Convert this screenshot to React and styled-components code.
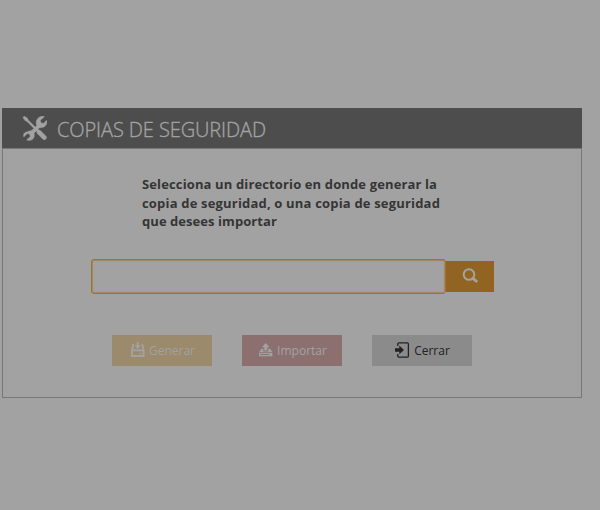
import React from "react";
import styled, { createGlobalStyle } from "styled-components";

const GlobalStyle = createGlobalStyle`
  * { box-sizing: border-box; }
  body { margin: 0; background: #a2a2a2; font-family: "Open Sans", "Noto Sans", sans-serif; }
`;

const Page = styled.main`
  height: 510px;
  padding: 108px 0 0 2px;
  overflow: hidden;
`;

const Dialog = styled.section`
  width: 580px;
  height: 290px;
`;

const Header = styled.header`
  display: flex;
  align-items: center;
  height: 40px;
  padding-left: 20px;
  background: #4d4d4d;
  color: #a2a2a2;
`;

const Title = styled.h1`
  margin: 4px 0 0 10px;
  font-size: 20px;
  line-height: 26px;
  font-weight: 300;
  letter-spacing: -0.1px;
  -webkit-text-stroke: 0.35px currentColor;
  white-space: nowrap;
`;

const Body = styled.div`
  display: flex;
  flex-direction: column;
  height: 250px;
  padding-top: 26px;
  border: 1px solid #777;
`;

const Message = styled.p`
  margin: 0 0 0 139px;
  font-size: 13px;
  line-height: 18.5px;
  font-weight: 700;
  color: #353535;
  white-space: nowrap;
`;

const Line = styled.span`
  display: block;
  letter-spacing: ${(p) => p.$spacing || "0"};
`;

const SearchRow = styled.div`
  display: flex;
  align-items: flex-end;
  margin: 28px 0 0 88px;
`;

const PathInput = styled.input`
  width: 355px;
  height: 35px;
  padding: 0 8px;
  border: 1px solid #a0722f;
  border-radius: 3px;
  outline: none;
  background: #a2a2a2;
  box-shadow: inset 0 0 1px 0.5px #a0722f;
  font: inherit;
`;

const SearchButton = styled.button`
  display: flex;
  align-items: center;
  justify-content: center;
  width: 48px;
  height: 31px;
  margin-bottom: 2px;
  padding: 0;
  border: 0;
  background: #916521;
  color: #a2a2a2;
`;

const Actions = styled.div`
  display: flex;
  gap: 30px;
  margin: 41px 0 0 109px;
`;

const Action = styled.button`
  display: flex;
  align-items: center;
  justify-content: center;
  gap: 4px;
  width: 100px;
  height: 31px;
  padding: 0 0 0 ${(p) => p.$shift || "0"};
  border: 0;
  background: ${(p) => p.$bg};
  color: ${(p) => p.$color || "#a2a2a2"};
  font-family: inherit;
  font-size: 12px;
`;

const ToolsIcon = () => (
  <svg width="25" height="25" viewBox="0 0.5 25 25" fill="currentColor" stroke="currentColor">
    <path strokeWidth="0.5" d="M5.5 16.2 10 14.8 14.8 10C13.4 6.4 14.7 2.6 18.4 1.2c1.3-.5 2.7-.5 4 0l-4.1 3.6.5 2.4 2.6.7 3.5-3.2c.5 5-2.3 7.8-7.4 7.5L12 17.7c1.1 3.3-.7 6.6-3.9 7.1-1.2.2-2.4 0-3.4-.4L8.3 21l-.7-2.5-2.4-.4L1.8 21.4c-.8-2.9.5-4.6 3.7-5.2Z" />
    <path strokeWidth="0.5" d="m2 .8 3 1.4 1.4 2.5L16 14.3l2 .4 6.2 6.2c1.4 1.8-1.3 4.4-3 3L15 17.7l-.2-2L5 6 2.7 4.8 1 2Z" />
  </svg>
);

const SearchIcon = () => (
  <svg width="16" height="16" viewBox="0 0 16 16" fill="none" stroke="currentColor">
    <circle cx="7" cy="6.5" r="5.3" strokeWidth="2" />
    <path d="m10.9 10.4 3.4 2.8" strokeWidth="2.8" strokeLinecap="round" />
  </svg>
);

const SaveIcon = () => (
  <svg width="14" height="16" viewBox="0 0 14 16" fill="none" stroke="currentColor">
    <path d="M2.5 2 1 7.8v6.2h11.6V7.8L11.1 2M1 8.4h12" strokeWidth="1.9" />
    <path d="M6.7 0v4" strokeWidth="1.8" />
    <path d="M3.6 3.2h6.2L6.7 6.8Z" fill="currentColor" stroke="none" />
    <path d="M8.5 11.5h2" strokeWidth="1.2" />
  </svg>
);

const UploadIcon = () => (
  <svg width="14" height="14" viewBox="0 0 14 14" fill="currentColor">
    <path d="M6.7 0 3 4.2h2.3V7.5h3V4.2h2.3ZM2.5 5.8h1.8v2.8h5V5.8h1.9L13.4 9H.2ZM0 9.7h13.4v3.6H0Z" />
    <path d="M1.2 11.5h9" stroke="#8c7070" strokeWidth="1" />
  </svg>
);

const ExitIcon = () => (
  <svg width="15" height="16" viewBox="0 0 15 16" fill="none" stroke="currentColor">
    <path d="M2.8 4V2q0-1.2 1.2-1.2h8.2q1.2 0 1.2 1.2v12q0 1.2-1.2 1.2H4q-1.2 0-1.2-1.2v-2" strokeWidth="1.3" />
    <path d="M0 6.3h4.3V3.6L9 8l-4.7 4.3V9.7H0Z" fill="currentColor" stroke="none" />
  </svg>
);

export default function App() {
  return (
    <>
      <GlobalStyle />
      <Page>
        <Dialog>
          <Header>
            <ToolsIcon />
            <Title>COPIAS DE SEGURIDAD</Title>
          </Header>
          <Body>
            <Message>
              <Line $spacing="0.13px">Selecciona un directorio en donde generar la</Line>
              <Line $spacing="0.18px">copia de seguridad, o una copia de seguridad</Line>
              <Line $spacing="0.06px">que desees importar</Line>
            </Message>
            <SearchRow>
              <PathInput aria-label="Directorio" />
              <SearchButton aria-label="Buscar"><SearchIcon /></SearchButton>
            </SearchRow>
            <Actions>
              <Action $bg="#9b8a6b" $shift="2px"><SaveIcon />Generar</Action>
              <Action $bg="#8c7070" $shift="2px"><UploadIcon />Importar</Action>
              <Action $bg="#8b8b8b" $color="#222" $shift="1px"><ExitIcon />Cerrar</Action>
            </Actions>
          </Body>
        </Dialog>
      </Page>
    </>
  );
}
